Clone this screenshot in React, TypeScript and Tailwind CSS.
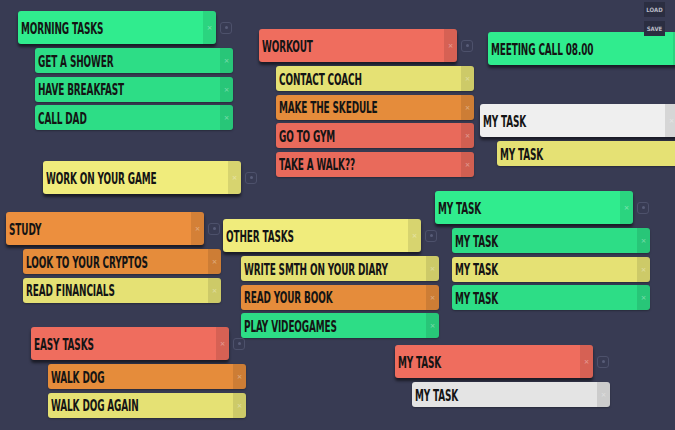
import React from 'react';

type Color = 'green' | 'red' | 'orange' | 'yellow' | 'white';

interface Task {
  label: string;
  color: Color;
}

interface TaskGroup {
  id: string;
  x: number;
  y: number;
  title: string;
  color: Color;
  tasks: Task[];
  pad?: number;
}

const headerColors: Record<Color, string> = {
  green: 'bg-[#30ec8e]',
  red: 'bg-[#ef6d5e]',
  orange: 'bg-[#ec8f3e]',
  yellow: 'bg-[#f0ec7c]',
  white: 'bg-[#efefef]',
};

const taskColors: Record<Color, string> = {
  green: 'bg-[#2ddd86]',
  red: 'bg-[#e96a5b]',
  orange: 'bg-[#e58c3b]',
  yellow: 'bg-[#e5e174]',
  white: 'bg-[#e4e4e4]',
};

const groups: TaskGroup[] = [
  {
    id: 'morning',
    x: 18,
    y: 11,
    title: 'Morning tasks',
    color: 'green',
    tasks: [
      { label: 'Get a shower', color: 'green' },
      { label: 'Have breakfast', color: 'green' },
      { label: 'Call dad', color: 'green' },
    ],
  },
  {
    id: 'workout',
    x: 259,
    y: 29,
    title: 'Workout',
    color: 'red',
    tasks: [
      { label: 'Contact coach', color: 'yellow' },
      { label: 'Make the skedule', color: 'orange' },
      { label: 'Go to gym', color: 'red' },
      { label: 'Take a walk??', color: 'red' },
    ],
  },
  { id: 'meeting', x: 488, y: 32, title: 'Meeting call 08.00', color: 'green', tasks: [] },
  {
    id: 'mytask-white',
    x: 480,
    y: 104,
    title: 'My task',
    color: 'white',
    tasks: [{ label: 'My task', color: 'yellow' }],
  },
  { id: 'game', x: 43, y: 161, title: 'Work on your game', color: 'yellow', tasks: [] },
  {
    id: 'study',
    x: 6,
    y: 212,
    title: 'Study',
    color: 'orange',
    tasks: [
      { label: 'Look to your cryptos', color: 'orange' },
      { label: 'Read financials', color: 'yellow' },
    ],
  },
  {
    id: 'other',
    x: 223,
    y: 219,
    title: 'Other tasks',
    color: 'yellow',
    pad: 18,
    tasks: [
      { label: 'Write smth on your diary', color: 'yellow' },
      { label: 'Read your book', color: 'orange' },
      { label: 'Play videogames', color: 'green' },
    ],
  },
  {
    id: 'mytask-green',
    x: 435,
    y: 191,
    title: 'My task',
    color: 'green',
    tasks: [
      { label: 'My task', color: 'green' },
      { label: 'My task', color: 'yellow' },
      { label: 'My task', color: 'green' },
    ],
  },
  {
    id: 'easy',
    x: 31,
    y: 327,
    title: 'Easy tasks',
    color: 'red',
    tasks: [
      { label: 'Walk dog', color: 'orange' },
      { label: 'Walk dog again', color: 'yellow' },
    ],
  },
  {
    id: 'mytask-red',
    x: 395,
    y: 345,
    title: 'My task',
    color: 'red',
    tasks: [{ label: 'My task', color: 'white' }],
  },
];

const fontStack = {
  fontFamily: '"Liberation Sans Narrow", "DejaVu Sans Condensed", "Liberation Sans", sans-serif',
};

const Stripe: React.FC = () => (
  <div className="w-[13px] h-full bg-black/10 flex items-center justify-center text-[9px] leading-none text-white/35 shrink-0">
    ×
  </div>
);

const Label: React.FC<{ text: string }> = ({ text }) => (
  <div className="flex-1 min-w-0 pl-[3px] overflow-hidden whitespace-nowrap">
    <span
      className="inline-block origin-left scale-x-[0.62] text-[16px] font-bold uppercase leading-none text-[#141414] tracking-[-0.2px]"
      style={fontStack}
    >
      {text}
    </span>
  </div>
);

const Group: React.FC<{ group: TaskGroup }> = ({ group }) => (
  <div className="absolute flex flex-col" style={{ left: group.x, top: group.y }}>
    <div className="flex items-center gap-[4px]">
      <div
        className={`w-[198px] h-[33px] rounded-[3px] flex items-center overflow-hidden shadow-[0_3px_3px_rgba(0,0,0,0.55)] ${headerColors[group.color]}`}
      >
        <Label text={group.title} />
        <Stripe />
      </div>
      <div className="w-[12px] h-[12px] rounded-[3px] border border-[#4d516b] flex items-center justify-center">
        <div className="w-[3px] h-[3px] rounded-full bg-[#585d78]" />
      </div>
    </div>
    {group.tasks.length > 0 && (
      <div className="flex flex-col gap-[3.5px] mt-[4px]" style={{ paddingLeft: group.pad ?? 17 }}>
        {group.tasks.map((t, i) => (
          <div
            key={i}
            className={`w-[198px] h-[25px] rounded-[3px] flex items-center overflow-hidden shadow-[0_1px_2px_rgba(0,0,0,0.3)] ${taskColors[t.color]}`}
          >
            <Label text={t.label} />
            <Stripe />
          </div>
        ))}
      </div>
    )}
  </div>
);

export default function App() {
  return (
    <div className="relative w-[675px] h-[430px] overflow-hidden bg-[#383b53]">
      {groups.map((g) => (
        <Group key={g.id} group={g} />
      ))}

      {/* load / save */}
      <div className="absolute top-[2px] right-[10px] flex flex-col gap-[4px] z-10">
        {['LOAD', 'SAVE'].map((b) => (
          <div
            key={b}
            className="w-[21px] h-[15px] bg-[#2b2e41] flex items-center justify-center text-[6px] font-bold text-[#b8bac4] leading-none"
            style={fontStack}
          >
            {b}
          </div>
        ))}
      </div>
    </div>
  );
}
